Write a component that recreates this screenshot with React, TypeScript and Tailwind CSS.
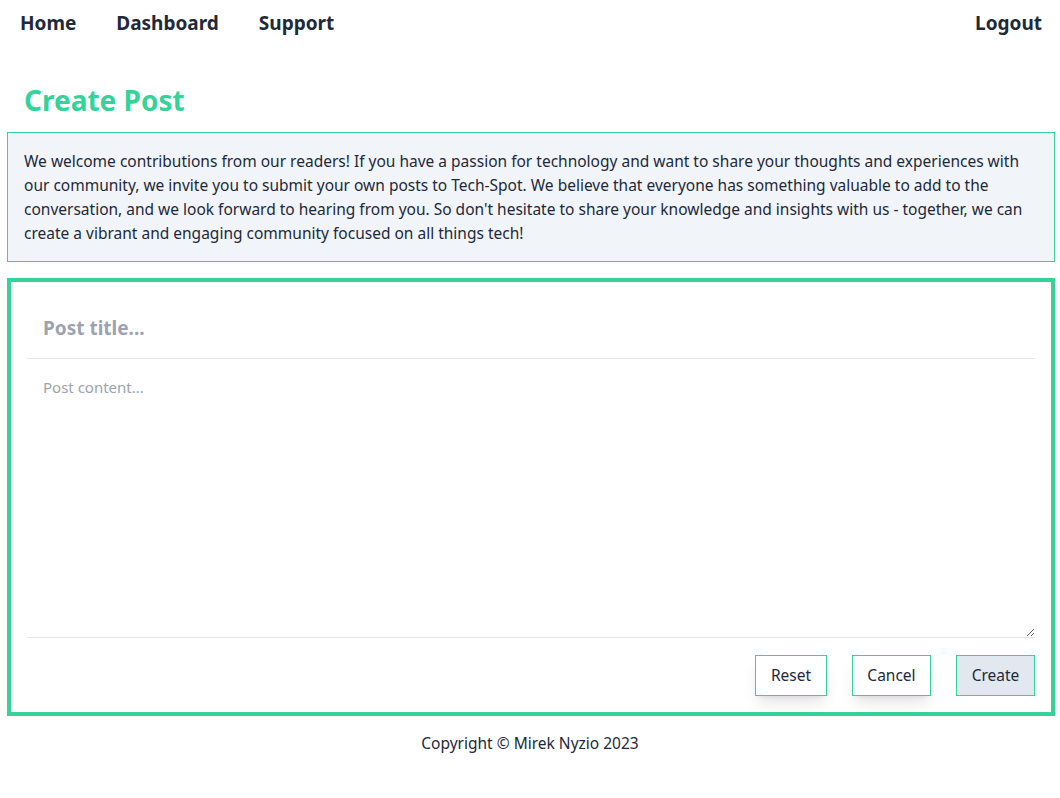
export default function App() {
  return (
    <div
      className="min-h-screen bg-white text-[#1e293b]"
      style={{ fontFamily: '"Noto Sans", "Open Sans", sans-serif' }}
    >
      <nav className="flex items-center justify-between h-[46px]">
        <div className="flex">
          <a href="#" className="px-5 text-[19px] font-bold">Home</a>
          <a href="#" className="px-5 text-[19px] font-bold">Dashboard</a>
          <a href="#" className="px-5 text-[19px] font-bold">Support</a>
        </div>
        <a href="#" className="px-[18px] text-[19px] font-bold">Logout</a>
      </nav>

      <h1 className="px-6 mt-[33px] text-[28px] leading-[42px] font-bold text-[#34d399]">Create Post</h1>

      <div className="ml-[7px] mr-[5px] mt-[11px] border border-[#34d399] bg-[#f1f5f9] px-4 py-4">
        <p className="text-[15.5px] leading-6">
          We welcome contributions from our readers! If you have a passion for technology and want to share your thoughts and experiences with our community, we invite you to submit your own posts to Tech-Spot. We believe that everyone has something valuable to add to the conversation, and we look forward to hearing from you. So don't hesitate to share your knowledge and insights with us - together, we can create a vibrant and engaging community focused on all things tech!
        </p>
      </div>

      <form className="ml-[7px] mr-[5px] mt-4 border-4 border-[#34d399] p-4 flex flex-col">
        <input
          type="text"
          placeholder="Post title..."
          className="h-[61px] px-4 text-[19px] font-bold border-b border-[#e5e7eb] outline-none placeholder:text-[#9ca3af]"
        />
        <textarea
          placeholder="Post content..."
          className="h-[279px] px-4 py-4 text-[15px] leading-6 border-b border-[#e5e7eb] outline-none placeholder:text-[#9ca3af]"
        />
        <div className="flex justify-end gap-[25px] mt-[17px]">
          <button type="button" className="h-[41px] w-[72px] border border-[#34d399] bg-white text-[15.5px] shadow-lg">Reset</button>
          <button type="button" className="h-[41px] w-[79px] border border-[#34d399] bg-white text-[15.5px] shadow-lg">Cancel</button>
          <button type="button" className="h-[41px] w-[79px] border border-[#34d399] bg-[#e2e8f0] text-[15.5px]">Create</button>
        </div>
      </form>

      <footer className="py-4 text-center text-[15.5px]">Copyright © Mirek Nyzio 2023</footer>
    </div>
  )
}
